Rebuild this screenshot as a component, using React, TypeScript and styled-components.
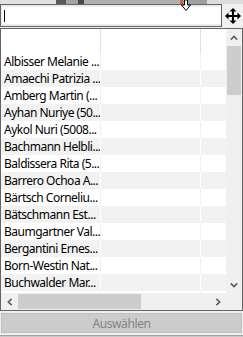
import React from "react";
import styled, { createGlobalStyle } from "styled-components";

const Global = createGlobalStyle`
  html, body { margin: 0; padding: 0; background: #f0f0f0; }
  body { font-family: "Noto Sans", "Segoe UI", sans-serif; }
  * { box-sizing: border-box; }
`;

const Page = styled.div`
  position: relative;
  width: 243px;
  height: 337px;
  overflow: hidden;
  background: #f0f0f0;
  display: flex;
  flex-direction: column;
`;

const TopStrip = styled.div`
  height: 4px;
  flex-shrink: 0;
  display: flex;
  background: #e4e4e4;
`;

const StripSeg = styled.div<{ $w: number; $c: string }>`
  width: ${(p) => p.$w}px;
  flex-shrink: 0;
  background: ${(p) => p.$c};
`;

const SearchRow = styled.div`
  height: 23px;
  flex-shrink: 0;
  display: flex;
  margin-bottom: 1px;
`;

const SearchBox = styled.div`
  width: 222px;
  height: 23px;
  border: 1px solid #646464;
  background: #ececec;
  padding: 2px 0 2px 1px;
  display: flex;
`;

const SearchInput = styled.div`
  flex: 1;
  background: #ffffff;
  display: flex;
  align-items: center;
  padding-left: 2px;
`;

const Caret = styled.span`
  display: block;
  width: 1px;
  height: 12px;
  background: #000;
`;

const MoveArea = styled.div`
  flex: 1;
  display: flex;
  align-items: center;
  justify-content: center;
  padding-top: 1px;
`;

const Grid = styled.div`
  height: 283px;
  flex-shrink: 0;
  border: 1px solid #646464;
  display: grid;
  grid-template-columns: 1fr 16px;
  grid-template-rows: 1fr 17px;
  background: #f0f0f0;
`;

const Body = styled.div`
  overflow: hidden;
  background: #ffffff;
`;

const HeaderRow = styled.div`
  height: 24px;
  display: flex;
  background: #ffffff;
`;

const HeaderCell = styled.div<{ $w?: number }>`
  ${(p) => (p.$w ? `width: ${p.$w}px; flex-shrink: 0;` : "flex: 1;")}
  border-right: 1px solid #e3e3e3;
  &:last-child { border-right: none; }
`;

const Row = styled.div<{ $alt: boolean }>`
  height: 17px;
  display: flex;
  background: ${(p) => (p.$alt ? "#f2f2f2" : "#ffffff")};
`;

const Cell = styled.div<{ $w?: number; $alt: boolean }>`
  ${(p) => (p.$w ? `width: ${p.$w}px; flex-shrink: 0;` : "flex: 1;")}
  border-right: 1px solid ${(p) => (p.$alt ? "#ffffff" : "#f0f0f0")};
  padding-left: 3px;
  font-size: 12px;
  letter-spacing: -0.5px;
  line-height: 17px;
  color: #000;
  white-space: nowrap;
  overflow: hidden;
  &:last-child { border-right: none; }
`;

const VScroll = styled.div`
  display: flex;
  flex-direction: column;
  background: #f0f0f0;
`;

const ArrowBtn = styled.div<{ $h?: boolean }>`
  ${(p) => (p.$h ? "width: 17px; height: 100%;" : "height: 17px;")}
  flex-shrink: 0;
  display: flex;
  align-items: center;
  justify-content: center;
`;

const VThumb = styled.div`
  height: 49px;
  margin: 0 1px;
  background: #cdcdcd;
  flex-shrink: 0;
`;

const Spacer = styled.div`
  flex: 1;
`;

const HScroll = styled.div`
  display: flex;
  background: #f0f0f0;
`;

const HThumb = styled.div`
  width: 123px;
  margin: 1px 0;
  background: #cdcdcd;
  flex-shrink: 0;
`;

const Corner = styled.div`
  background: #f0f0f0;
`;

const Button = styled.div`
  margin: 2px 0 0 1px;
  width: 241px;
  height: 20px;
  flex-shrink: 0;
  background: #cccccc;
  border: 1px solid #bfbfbf;
  color: #838383;
  font-size: 12px;
  letter-spacing: -0.4px;
  display: flex;
  align-items: center;
  justify-content: center;
`;

const BottomStrip = styled.div`
  flex: 1;
  display: flex;
  flex-direction: column;
  justify-content: flex-end;
`;

const BottomLine = styled.div`
  height: 2px;
  background: #c8c8c8;
  border-top: 1px solid #a0a0a0;
`;

const PointerOverlay = styled.svg`
  position: absolute;
  left: 180px;
  top: 0;
`;

const names = [
  "Albisser Melanie ...",
  "Amaechi Patrizia ...",
  "Amberg Martin (...",
  "Ayhan Nuriye (50...",
  "Aykol Nuri (5008...",
  "Bachmann Helbli...",
  "Baldissera Rita (5...",
  "Barrero Ochoa A...",
  "Bärtsch Corneliu...",
  "Bätschmann Est...",
  "Baumgartner Val...",
  "Bergantini Ernes...",
  "Born-Westin Nat...",
  "Buchwalder Mar...",
  "",
];

const Chevron: React.FC<{ dir: "up" | "down" | "left" | "right" }> = ({ dir }) => {
  const rot = { up: 0, down: 180, left: -90, right: 90 }[dir];
  return (
    <svg width="8" height="8" viewBox="0 0 8 8" style={{ transform: `rotate(${rot}deg)` }}>
      <polyline points="0.8,5.6 4,2.4 7.2,5.6" fill="none" stroke="#606060" strokeWidth="1.7" />
    </svg>
  );
};

const MoveIcon = () => (
  <svg width="16" height="16" viewBox="0 0 16 16" fill="#000">
    <polygon points="8,0 11.5,3.5 4.5,3.5" />
    <polygon points="8,16 11.5,12.5 4.5,12.5" />
    <polygon points="0,8 3.5,4.5 3.5,11.5" />
    <polygon points="16,8 12.5,4.5 12.5,11.5" />
    <rect x="7" y="3" width="2" height="10" />
    <rect x="3" y="7" width="10" height="2" />
  </svg>
);

export default function App() {
  return (
    <>
      <Global />
      <Page>
        <TopStrip>
          <StripSeg $w={56} $c="#e2e2e2" />
          <StripSeg $w={10} $c="#5a5a5a" />
          <StripSeg $w={12} $c="#a4a4a4" />
          <StripSeg $w={6} $c="#4a4a4a" />
          <StripSeg $w={96} $c="#b0b0b0" />
          <StripSeg $w={3} $c="#c8623a" />
          <StripSeg $w={24} $c="#a0a0a0" />
          <StripSeg $w={36} $c="#dcdcdc" />
        </TopStrip>
        <SearchRow>
          <SearchBox>
            <SearchInput>
              <Caret />
            </SearchInput>
          </SearchBox>
          <MoveArea>
            <MoveIcon />
          </MoveArea>
        </SearchRow>
        <Grid>
          <Body>
            <HeaderRow>
              <HeaderCell $w={100} />
              <HeaderCell $w={100} />
              <HeaderCell />
            </HeaderRow>
            {names.map((n, i) => (
              <Row key={i} $alt={i % 2 === 1}>
                <Cell $w={100} $alt={i % 2 === 1}>{n}</Cell>
                <Cell $w={100} $alt={i % 2 === 1} />
                <Cell $alt={i % 2 === 1} />
              </Row>
            ))}
          </Body>
          <VScroll>
            <ArrowBtn>
              <Chevron dir="up" />
            </ArrowBtn>
            <VThumb />
            <Spacer />
            <ArrowBtn>
              <Chevron dir="down" />
            </ArrowBtn>
          </VScroll>
          <HScroll>
            <ArrowBtn $h>
              <Chevron dir="left" />
            </ArrowBtn>
            <HThumb />
            <Spacer />
            <ArrowBtn $h>
              <Chevron dir="right" />
            </ArrowBtn>
          </HScroll>
          <Corner />
        </Grid>
        <Button>Auswählen</Button>
        <BottomStrip>
          <BottomLine />
        </BottomStrip>
        <PointerOverlay width="12" height="13" viewBox="0 0 12 13">
          <path d="M4.5,0 L7.5,0 L7.5,5 L10.5,5 L6,10.5 L1.5,5 L4.5,5 Z" fill="#fff" stroke="#000" strokeWidth="1" />
        </PointerOverlay>
      </Page>
    </>
  );
}
